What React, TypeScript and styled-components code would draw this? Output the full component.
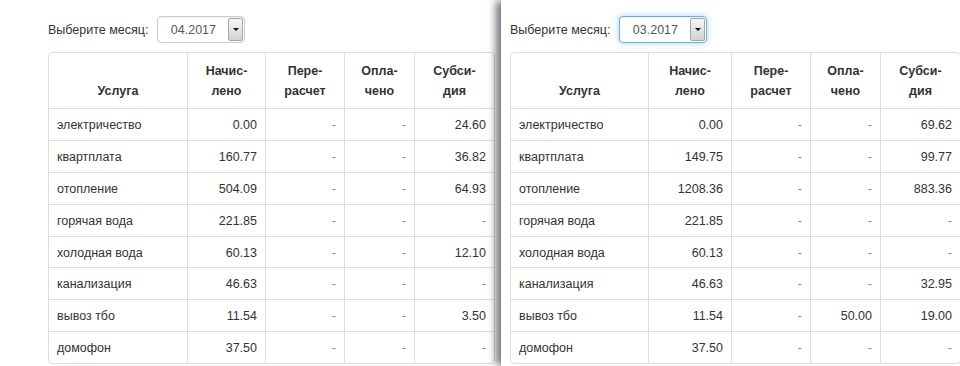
import React from "react";
import styled, { createGlobalStyle } from "styled-components";

const GlobalStyle = createGlobalStyle`
  html, body {
    margin: 0;
    padding: 0;
    background: #fff;
  }
  body {
    font-family: "Liberation Sans", Arial, sans-serif;
    font-size: 12.5px;
    color: #333;
  }
`;

type Row = [string, string, string, string, string];

const april: Row[] = [
  ["электричество", "0.00", "-", "-", "24.60"],
  ["квартплата", "160.77", "-", "-", "36.82"],
  ["отопление", "504.09", "-", "-", "64.93"],
  ["горячая вода", "221.85", "-", "-", "-"],
  ["холодная вода", "60.13", "-", "-", "12.10"],
  ["канализация", "46.63", "-", "-", "-"],
  ["вывоз тбо", "11.54", "-", "-", "3.50"],
  ["домофон", "37.50", "-", "-", "-"],
];

const march: Row[] = [
  ["электричество", "0.00", "-", "-", "69.62"],
  ["квартплата", "149.75", "-", "-", "99.77"],
  ["отопление", "1208.36", "-", "-", "883.36"],
  ["горячая вода", "221.85", "-", "-", "-"],
  ["холодная вода", "60.13", "-", "-", "-"],
  ["канализация", "46.63", "-", "-", "32.95"],
  ["вывоз тбо", "11.54", "-", "50.00", "19.00"],
  ["домофон", "37.50", "-", "-", "-"],
];

const Page = styled.div`
  display: flex;
  height: 366px;
  overflow: hidden;
`;

const LeftPanel = styled.div`
  flex: none;
  width: 453px;
  padding: 16px 0 0 48px;
  overflow: hidden;
`;

const RightPanel = styled.div`
  position: relative;
  z-index: 1;
  flex: 1;
  min-width: 0;
  padding: 16px 0 0 9px;
  background: #fff;
  box-shadow: -6px 0 8px -1px rgba(0, 0, 0, 0.55);
  overflow: hidden;
`;

const Toolbar = styled.div`
  display: flex;
  align-items: center;
  gap: 9px;
  height: 27px;
  margin-bottom: 9px;
  white-space: nowrap;
`;

const Label = styled.span`
  color: #333;
  margin-top: 1px;
`;

const Select = styled.div<{ $focused?: boolean }>`
  display: flex;
  width: 88px;
  height: 27px;
  box-sizing: border-box;
  border: 1px solid ${(p) => (p.$focused ? "#66afe9" : "#ccc")};
  border-radius: 4px;
  box-shadow: ${(p) =>
    p.$focused
      ? "inset 0 1px 1px rgba(0,0,0,.075), 0 0 6px rgba(102,175,233,.6)"
      : "inset 0 1px 1px rgba(0,0,0,.075)"};
  background: #fff;
  overflow: hidden;
`;

const SelectValue = styled.span`
  flex: 1;
  display: flex;
  align-items: center;
  justify-content: center;
  color: #555;
  font-size: 12.5px;
`;

const SelectButton = styled.span`
  flex: none;
  width: 13px;
  margin: 1px 1px 1px 0;
  display: flex;
  align-items: center;
  justify-content: center;
  border: 1px solid #a6a6a6;
  border-radius: 2px;
  background: linear-gradient(#f6f6f6, #d2d2d2);

  &::after {
    content: "";
    border-left: 3px solid transparent;
    border-right: 3px solid transparent;
    border-top: 3px solid #111;
  }
`;

const Table = styled.table`
  border-collapse: separate;
  border-spacing: 0;
  table-layout: fixed;
  border: 1px solid #ddd;
  border-radius: 4px;
  line-height: 20px;
`;

const Th = styled.th`
  padding: 8px 8px 7px;
  font-weight: bold;
  text-align: center;
  vertical-align: bottom;
  color: #333;
  white-space: nowrap;

  & + & {
    border-left: 1px solid #ddd;
  }
`;

const Td = styled.td<{ $dash?: boolean; $name?: boolean }>`
  padding: 6px 8px 4.875px;
  border-top: 1px solid #ddd;
  text-align: ${(p) => (p.$name ? "left" : "right")};
  color: ${(p) => (p.$dash ? "#8a8a8a" : "#333")};
  white-space: nowrap;

  & + & {
    border-left: 1px solid #ddd;
  }
`;

const headers = [
  ["", "Услуга"],
  ["Начис-", "лено"],
  ["Пере-", "расчет"],
  ["Опла-", "чено"],
  ["Субси-", "дия"],
];

const ServiceTable = ({ rows, widths }: { rows: Row[]; widths: number[] }) => (
  <Table style={{ width: widths.reduce((a, b) => a + b, 0) }}>
    <colgroup>
      {widths.map((w, i) => (
        <col key={i} style={{ width: w }} />
      ))}
    </colgroup>
    <thead>
      <tr>
        {headers.map(([a, b], i) => (
          <Th key={i}>
            {a && (
              <>
                {a}
                <br />
              </>
            )}
            {b}
          </Th>
        ))}
      </tr>
    </thead>
    <tbody>
      {rows.map((r) => (
        <tr key={r[0]}>
          {r.map((c, i) => (
            <Td key={i} $name={i === 0} $dash={c === "-"}>
              {c}
            </Td>
          ))}
        </tr>
      ))}
    </tbody>
  </Table>
);

const MonthPicker = ({ value, focused }: { value: string; focused?: boolean }) => (
  <Toolbar>
    <Label>Выберите месяц:</Label>
    <Select $focused={focused}>
      <SelectValue>{value}</SelectValue>
      <SelectButton />
    </Select>
  </Toolbar>
);

export default function App() {
  return (
    <Page>
      <GlobalStyle />
      <LeftPanel>
        <MonthPicker value="04.2017" />
        <ServiceTable rows={april} widths={[138, 78, 79, 70, 80]} />
      </LeftPanel>
      <RightPanel>
        <MonthPicker value="03.2017" focused />
        <ServiceTable rows={march} widths={[137, 83, 79, 70, 80]} />
      </RightPanel>
    </Page>
  );
}
